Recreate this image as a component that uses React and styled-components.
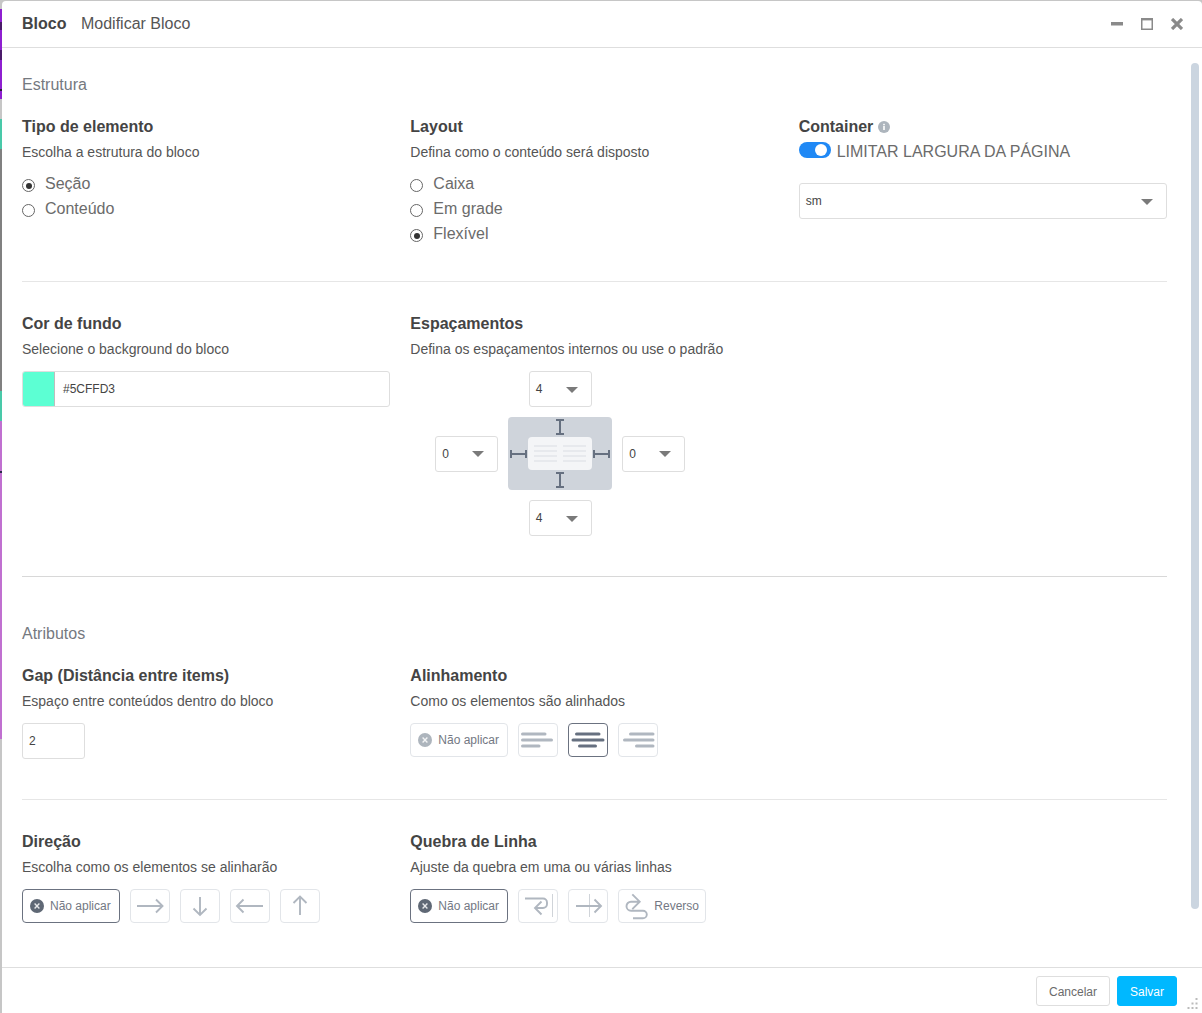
import React from 'react';
import styled, { createGlobalStyle } from 'styled-components';

const GlobalStyle = createGlobalStyle`
  html, body {
    margin: 0;
    height: 100%;
    overflow: hidden;
    font-family: "Liberation Sans", Arial, sans-serif;
  }
  #root { height: 100%; }
  * { box-sizing: border-box; }
`;

// Backdrop: only a 2px sliver of the page behind the modal is visible
const Page = styled.div`
  display: flex;
  height: 100%;
  background: #c6c6c6;
`;

const Backdrop = styled.div`
  width: 2px;
  flex: none;
  display: flex;
  flex-direction: column;
`;

const Stripe = styled.div`
  height: ${(p) => p.$h}px;
  background: ${(p) => p.$color};
`;

const Modal = styled.div`
  position: relative;
  flex: 1;
  min-width: 0;
  margin-top: 1px;
  display: flex;
  flex-direction: column;
  background: #fff;
  border-radius: 4px 4px 0 0;
`;

const Header = styled.header`
  height: 47px;
  flex: none;
  display: flex;
  align-items: center;
  padding: 0 19px 0 20px;
  border-bottom: 1px solid #dedede;
  font-size: 16px;
  color: #555;
`;

const HeaderTitle = styled.strong`
  font-weight: 700;
  color: #444;
  margin-right: 14.5px;
`;

const WindowControls = styled.div`
  margin-left: auto;
  display: flex;
  gap: 18px;
  color: #8a8a8a;

  svg { display: block; }
`;

const Body = styled.div`
  flex: 1;
  min-height: 0;
  display: flex;
`;

const Content = styled.main`
  flex: 1;
  min-width: 0;
  overflow: hidden;
  padding: 0 24px 0 20px;
`;

const ScrollThumb = styled.div`
  flex: none;
  width: 8px;
  height: 846px;
  margin: 15px 3px 0 0;
  border-radius: 4px;
  background: #cbd5e0;
`;

const Overline = styled.h3`
  margin: ${(p) => p.$top}px 0 18px;
  font-size: 16px;
  line-height: 24px;
  font-weight: 400;
  color: #75797f;
`;

const Row = styled.section`
  display: grid;
  grid-template-columns: repeat(3, minmax(0, 1fr));
  column-gap: 20px;
  padding-bottom: ${(p) => p.$bottom}px;
`;

const Divider = styled.hr`
  margin: 0 0 ${(p) => p.$after}px;
  border: 0;
  border-top: 1px solid ${(p) => (p.$strong ? '#d8d8d8' : '#e6e6e6')};
`;

const Title = styled.h4`
  margin: 0 0 3px;
  font-size: 16px;
  line-height: 24px;
  font-weight: 700;
  color: #444;
  display: flex;
  align-items: center;
  gap: 5px;
`;

const Description = styled.p`
  margin: 0 0 ${(p) => p.$after || 12}px;
  font-size: 14px;
  line-height: 20px;
  color: #555;
`;

const RadioList = styled.div`
  display: flex;
  flex-direction: column;
`;

const RadioRow = styled.label`
  display: flex;
  align-items: center;
  gap: 10px;
  height: 25px;
  font-size: 16px;
  color: #6b6b6b;
`;

const RadioMark = styled.span`
  width: 13px;
  height: 13px;
  margin-top: 4px;
  flex: none;
  display: flex;
  align-items: center;
  justify-content: center;
  border: 1px solid #666;
  border-radius: 50%;
  background: #fff;

  &::after {
    content: '';
    width: 6px;
    height: 6px;
    border-radius: 50%;
    background: ${(p) => (p.$checked ? '#333' : 'transparent')};
  }
`;

const ToggleRow = styled.div`
  display: flex;
  align-items: center;
  gap: 6px;
  height: 16px;
  margin-bottom: 25px;
  font-size: 16px;
  color: #6b6b6b;
  white-space: nowrap;
`;

const ToggleLabel = styled.span`
  padding-top: 3px;
`;

const Toggle = styled.span`
  width: 32px;
  height: 16px;
  flex: none;
  display: flex;
  align-items: center;
  justify-content: flex-end;
  padding-right: 4px;
  border-radius: 8px;
  background: #2089f5;

  &::after {
    content: '';
    width: 12px;
    height: 12px;
    border-radius: 50%;
    background: #fff;
  }
`;

const SelectBox = styled.div`
  height: 36px;
  width: ${(p) => (p.$full ? '100%' : '63px')};
  display: flex;
  align-items: center;
  justify-content: space-between;
  padding: 0 13px 0 6px;
  border: 1px solid #dedede;
  border-radius: 3px;
  background: #fff;
  font-size: 12px;
  color: #444;

  &::after {
    content: '';
    border-left: 6px solid transparent;
    border-right: 6px solid transparent;
    border-top: 6px solid #7a7a7a;
    margin-top: 1px;
  }
`;

const ColorField = styled.div`
  height: 36px;
  display: flex;
  align-items: center;
  border: 1px solid #dedede;
  border-radius: 3px;
  background: #fff;
  font-size: 12px;
  color: #444;
`;

const ColorSwatch = styled.span`
  width: 32px;
  height: 100%;
  margin-right: 8px;
  background: ${(p) => p.$color};
  border-right: 1px solid #bdbdbd;
  border-radius: 2px 0 0 2px;
`;

const NumberField = styled.div`
  width: 63px;
  height: 36px;
  display: flex;
  align-items: center;
  padding: 0 6px;
  border: 1px solid #dedede;
  border-radius: 3px;
  font-size: 12px;
  color: #444;
`;

const SpacingGrid = styled.div`
  display: grid;
  grid-template-columns: 63px 104px 63px;
  gap: 10px;
  align-items: center;
  justify-items: center;
  margin-left: 25px;
  width: 250px;
`;

const SpacingSlot = styled.div`
  grid-column: ${(p) => p.$col};
`;

const Diagram = styled.svg`
  display: block;
  grid-column: 2;
`;

const WideCell = styled.div`
  grid-column: span 2;
`;

const ButtonRow = styled.div`
  display: flex;
  gap: 10px;
`;

const ToolButton = styled.button`
  height: 34px;
  width: ${(p) => p.$width || 40}px;
  flex: none;
  display: inline-flex;
  align-items: center;
  padding: 0;
  border: 1px solid ${(p) => (p.$active ? '#6b7280' : '#e2e5e9')};
  border-radius: 4px;
  background: #fff;
  font: 12px "Liberation Sans", Arial, sans-serif;
  color: #737883;
  white-space: nowrap;

  svg { display: block; flex: none; }
`;

const NoneButton = styled(ToolButton)`
  gap: 6px;
  padding-left: 7px;
`;

const ReverseLabel = styled.span`
  margin-left: 1px;
`;

const Footer = styled.footer`
  height: 46px;
  flex: none;
  display: flex;
  justify-content: flex-end;
  gap: 7px;
  padding: 8px 25px 0 0;
  border-top: 1px solid #dedede;
`;

const FooterButton = styled.button`
  height: 30px;
  width: ${(p) => p.$width}px;
  padding: 1px 0 0;
  border: 1px solid ${(p) => (p.$primary ? '#00b8ff' : '#dedede')};
  border-radius: 3px;
  background: ${(p) => (p.$primary ? '#00b8ff' : '#fff')};
  color: ${(p) => (p.$primary ? '#fff' : '#6b6b6b')};
  font: 12px "Liberation Sans", Arial, sans-serif;
`;

const ResizeGrip = styled.svg`
  position: absolute;
  right: 4px;
  bottom: 4px;
`;

const STROKE = '#b0b7c0';

const stripes = [
  [9, '#c6c6c6'], [13, '#8e1fd0'], [8, '#4b1a6a'], [20, '#8e1fd0'], [10, '#4b1a6a'],
  [29, '#8e1fd0'], [2, '#2b1a3a'], [8, '#8e1fd0'], [20, '#c6c6c6'], [30, '#49c9a9'],
  [242, '#808080'], [30, '#49c9a9'], [50, '#c070d0'], [2, '#2b2b4a'], [266, '#c070d0'],
  [274, '#c6c6c6'],
];

const CloseDisc = ({ active }) => (
  <svg width="14" height="14" viewBox="0 0 14 14">
    <circle cx="7" cy="7" r="7" fill={active ? '#5f6875' : '#adb5bd'} />
    <path d="M4.6 4.6l4.8 4.8M9.4 4.6l-4.8 4.8" stroke="#fff" strokeWidth="1.4" opacity="0.85" />
  </svg>
);

// 40x34 glyphs, coordinates are relative to the outside of the button
const Glyph = ({ children, width = 38, color = STROKE }) => (
  <svg width={width} height="32" viewBox={`1 1 ${width} 32`} fill="none" stroke={color} strokeWidth="1.9">
    {children}
  </svg>
);

const AlignLines = ({ lines, color }) => (
  <Glyph color={color}>
    {lines.map(([x1, x2, y]) => (
      <line key={y} x1={x1} x2={x2} y1={y} y2={y} strokeWidth="3" strokeLinecap="round" />
    ))}
  </Glyph>
);

const NoneAction = ({ active }) => (
  <NoneButton $width={98} $active={active}>
    <CloseDisc active={active} />
    Não aplicar
  </NoneButton>
);

const Spacing = ({ value }) => <SelectBox>{value}</SelectBox>;

const App = () => (
  <Page>
    <GlobalStyle />
    <Backdrop>
      {stripes.map(([h, color], i) => (
        <Stripe key={i} $h={h} $color={color} />
      ))}
    </Backdrop>

    <Modal>
      <Header>
        <HeaderTitle>Bloco</HeaderTitle>
        Modificar Bloco
        <WindowControls>
          <svg width="12" height="12" viewBox="0 0 12 12">
            <rect x="0" y="4" width="12" height="3.5" fill="currentColor" />
          </svg>
          <svg width="12" height="12" viewBox="0 0 12 12" fill="none" stroke="currentColor">
            <rect x="0.75" y="1" width="10.5" height="10.25" strokeWidth="1.5" />
            <line x1="0" x2="12" y1="1.2" y2="1.2" strokeWidth="2.4" />
          </svg>
          <svg width="12" height="12" viewBox="0 0 12 12" stroke="currentColor" strokeWidth="3.2">
            <path d="M1 1l10 10M11 1L1 11" />
          </svg>
        </WindowControls>
      </Header>

      <Body>
        <Content>
          <Overline $top={25}>Estrutura</Overline>
          <Row $bottom={35}>
            <div>
              <Title>Tipo de elemento</Title>
              <Description $after={9}>Escolha a estrutura do bloco</Description>
              <RadioList>
                <RadioRow><RadioMark $checked />Seção</RadioRow>
                <RadioRow><RadioMark />Conteúdo</RadioRow>
              </RadioList>
            </div>
            <div>
              <Title>Layout</Title>
              <Description $after={9}>Defina como o conteúdo será disposto</Description>
              <RadioList>
                <RadioRow><RadioMark />Caixa</RadioRow>
                <RadioRow><RadioMark />Em grade</RadioRow>
                <RadioRow><RadioMark $checked />Flexível</RadioRow>
              </RadioList>
            </div>
            <div>
              <Title>
                Container
                <svg width="12" height="12" viewBox="0 0 12 12">
                  <circle cx="6" cy="6" r="6" fill="#adb5bd" />
                  <rect x="5.2" y="5" width="1.6" height="4" fill="#fff" />
                  <rect x="5.2" y="2.8" width="1.6" height="1.5" fill="#fff" />
                </svg>
              </Title>
              <ToggleRow>
                <Toggle />
                <ToggleLabel>LIMITAR LARGURA DA PÁGINA</ToggleLabel>
              </ToggleRow>
              <SelectBox $full>sm</SelectBox>
            </div>
          </Row>

          <Divider $after={30} />

          <Row $bottom={40}>
            <div>
              <Title>Cor de fundo</Title>
              <Description>Selecione o background do bloco</Description>
              <ColorField>
                <ColorSwatch $color="#5CFFD3" />
                #5CFFD3
              </ColorField>
            </div>
            <div>
              <Title>Espaçamentos</Title>
              <Description>Defina os espaçamentos internos ou use o padrão</Description>
              <SpacingGrid>
                <SpacingSlot $col={2}><Spacing value="4" /></SpacingSlot>
                <SpacingSlot $col={1}><Spacing value="0" /></SpacingSlot>
                <Diagram width="104" height="73" viewBox="0 0 104 73">
                  <rect width="104" height="73" rx="4" fill="#cfd4db" />
                  <rect x="20" y="20" width="64" height="33" rx="4" fill="#f4f5f7" />
                  <g stroke="#e4e6ea" strokeWidth="1.6">
                    {[29, 34, 39, 44].map((y) => (
                      <g key={y}>
                        <line x1="26" x2="49" y1={y} y2={y} />
                        <line x1="55" x2="78" y1={y} y2={y} />
                      </g>
                    ))}
                  </g>
                  <g stroke="#667080" strokeWidth="2" fill="none">
                    <path d="M48 3h8M52 3v14M48 17h8" />
                    <path d="M48 56h8M52 56v14M48 70h8" />
                    <path d="M3 33v8M3 37h15M18 33v8" />
                    <path d="M86 33v8M86 37h15M101 33v8" />
                  </g>
                </Diagram>
                <SpacingSlot $col={3}><Spacing value="0" /></SpacingSlot>
                <SpacingSlot $col={2}><Spacing value="4" /></SpacingSlot>
              </SpacingGrid>
            </div>
          </Row>

          <Divider $strong $after={45} />

          <Overline $top={0}>Atributos</Overline>
          <Row $bottom={40}>
            <div>
              <Title>Gap (Distância entre items)</Title>
              <Description>Espaço entre conteúdos dentro do bloco</Description>
              <NumberField>2</NumberField>
            </div>
            <WideCell>
              <Title>Alinhamento</Title>
              <Description>Como os elementos são alinhados</Description>
              <ButtonRow>
                <NoneAction />
                <ToolButton>
                  <AlignLines lines={[[4.5, 27, 11], [4.5, 33.5, 17], [4.5, 21, 23]]} />
                </ToolButton>
                <ToolButton $active>
                  <AlignLines color="#667080" lines={[[8.5, 31, 11], [5, 35, 17], [11.5, 27.5, 23]]} />
                </ToolButton>
                <ToolButton>
                  <AlignLines lines={[[12.5, 35, 11], [6.5, 35, 17], [18.5, 35, 23]]} />
                </ToolButton>
              </ButtonRow>
            </WideCell>
          </Row>

          <Divider $after={30} />

          <Row $bottom={43}>
            <div>
              <Title>Direção</Title>
              <Description>Escolha como os elementos se alinharão</Description>
              <ButtonRow>
                <NoneAction active />
                <ToolButton>
                  <Glyph><path d="M7 17h25.5M26 10.5l6.5 6.5-6.5 6.5" /></Glyph>
                </ToolButton>
                <ToolButton>
                  <Glyph><path d="M20 8v18M13.5 19.5L20 26l6.5-6.5" /></Glyph>
                </ToolButton>
                <ToolButton>
                  <Glyph><path d="M33 17H7M13.5 10.5L7 17l6.5 6.5" /></Glyph>
                </ToolButton>
                <ToolButton>
                  <Glyph><path d="M20 26V7.5M13.5 14L20 7.5l6.5 6.5" /></Glyph>
                </ToolButton>
              </ButtonRow>
            </div>
            <WideCell>
              <Title>Quebra de Linha</Title>
              <Description>Ajuste da quebra em uma ou várias linhas</Description>
              <ButtonRow>
                <NoneAction active />
                <ToolButton>
                  <Glyph>
                    <path d="M7 9.5h18a4 4 0 0 1 4 4v1.5a4 4 0 0 1-4 4h-8M23.5 12.5L17 19l6.5 6.5" />
                    <line x1="34.5" x2="34.5" y1="5" y2="28" strokeWidth="1" opacity="0.6" />
                  </Glyph>
                </ToolButton>
                <ToolButton>
                  <Glyph>
                    <path d="M8 17h25M26.5 10.5L33 17l-6.5 6.5" />
                    <line x1="21.5" x2="21.5" y1="5" y2="28" strokeWidth="1" opacity="0.6" />
                  </Glyph>
                </ToolButton>
                <ToolButton $width={88}>
                  <Glyph width={34}>
                    <path d="M21.7 12.7H13a4.5 4.5 0 0 0 0 9h12a3.8 3.8 0 0 1 0 7.6H15M14.3 5.3l7.4 7.4-7.4 7.4" />
                  </Glyph>
                  <ReverseLabel>Reverso</ReverseLabel>
                </ToolButton>
              </ButtonRow>
            </WideCell>
          </Row>
        </Content>
        <ScrollThumb />
      </Body>

      <Footer>
        <FooterButton $width={74}>Cancelar</FooterButton>
        <FooterButton $width={60} $primary>Salvar</FooterButton>
      </Footer>

      <ResizeGrip width="11" height="11" viewBox="0 0 11 11" fill="#bbb">
        <rect x="8.5" y="0" width="2" height="2" />
        <rect x="4.5" y="4.5" width="2" height="2" />
        <rect x="8.5" y="4.5" width="2" height="2" />
        <rect x="0.5" y="9" width="2" height="2" />
        <rect x="4.5" y="9" width="2" height="2" />
        <rect x="8.5" y="9" width="2" height="2" />
      </ResizeGrip>
    </Modal>
  </Page>
);

export default App;
